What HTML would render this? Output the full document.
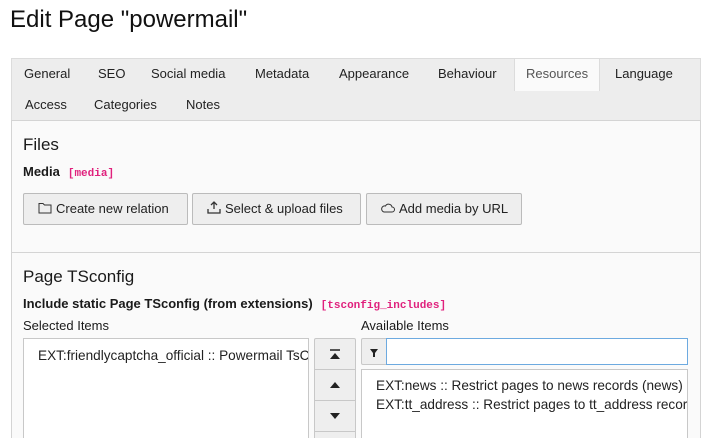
<!DOCTYPE html>
<html style="overflow:hidden;width:707px;height:438px"><head><meta charset="utf-8"><style>
*{box-sizing:border-box;margin:0;padding:0}
body{width:707px;height:438px;overflow:hidden;background:#fff;font-family:"Liberation Sans","DejaVu Sans",sans-serif;color:#1a1a1a;position:relative}
.a{position:absolute;white-space:nowrap}
.tabs{position:absolute;left:11px;top:58px;width:690px;height:63px;background:#ededed;border:1px solid #dcdcdc;border-bottom:none}
.tab{position:absolute;font-size:13px;color:#222}
.panel{position:absolute;left:11px;top:120px;width:690px;height:318px;background:#fafafa;border:1px solid #d4d4d4;border-bottom:none}
.btn{position:absolute;top:193px;height:32px;background:#eee;border:1px solid #bbb;border-radius:2px;font-size:13px;line-height:30px;padding-left:14px;color:#222}
.code{font-family:"Liberation Mono",monospace;color:#e0217d;font-size:11px;font-weight:bold;margin-left:8px}
.box{position:absolute;background:#fff;border:1px solid #c8c8c8;border-bottom:none;font-size:13.6px;color:#222}
.mv{position:absolute;left:314px;width:42px;height:32px;background:#eee;border:1px solid #c8c8c8}
</style></head><body>
<div class="a" style="left:10px;top:6px;font-size:24px;color:#111">Edit Page "powermail"</div>
<div class="tabs"></div>
<div style="position:absolute;left:514px;top:58px;width:86px;height:33px;background:#fafafa;border:1px solid #dcdcdc;border-bottom:none"></div>
<div class="tab a" style="left:24px;top:66px">General</div>
<div class="tab a" style="left:98px;top:66px">SEO</div>
<div class="tab a" style="left:151px;top:66px">Social media</div>
<div class="tab a" style="left:255px;top:66px">Metadata</div>
<div class="tab a" style="left:339px;top:66px">Appearance</div>
<div class="tab a" style="left:438px;top:66px">Behaviour</div>
<div class="tab a" style="left:526px;top:66px;color:#555">Resources</div>
<div class="tab a" style="left:615px;top:66px">Language</div>
<div class="tab a" style="left:25px;top:97px">Access</div>
<div class="tab a" style="left:94px;top:97px">Categories</div>
<div class="tab a" style="left:186px;top:97px">Notes</div>
<div class="panel"></div>
<div style="position:absolute;left:12px;top:252px;width:688px;height:1px;background:#d4d4d4"></div>
<div class="a" style="left:23px;top:135px;font-size:17px">Files</div>
<div class="a" style="left:23px;top:164px;font-size:13px;font-weight:bold">Media<span class="code">[media]</span></div>
<div class="btn a" style="left:23px;width:165px"><svg width="14" height="12" viewBox="0 0 14 12" style="vertical-align:-1px;margin-right:4px"><path d="M1 1.5h4l1.5 1.5H13v8H1z" fill="none" stroke="#333" stroke-width="1"/></svg>Create new relation</div>
<div class="btn a" style="left:192px;width:169px"><svg width="14" height="13" viewBox="0 0 14 13" style="vertical-align:-1px;margin-right:4px"><path d="M7 1v7M4 4l3-3 3 3M1 8v4h12V8" fill="none" stroke="#333" stroke-width="1.3"/></svg>Select &amp; upload files</div>
<div class="btn a" style="left:366px;width:156px"><svg width="14" height="10" viewBox="0 0 14 10" style="vertical-align:0px;margin-right:4px"><path d="M3 9h8a2.5 2.5 0 0 0 0-5 3.5 3.5 0 0 0-6.5-1A3 3 0 0 0 3 9z" fill="none" stroke="#333" stroke-width="1"/></svg>Add media by URL</div>
<div class="a" style="left:23px;top:267px;font-size:17px">Page TSconfig</div>
<div class="a" style="left:23px;top:296px;font-size:13px;font-weight:bold">Include static Page TSconfig (from extensions)<span class="code">[tsconfig_includes]</span></div>
<div class="a" style="left:23px;top:318px;font-size:13px">Selected Items</div>
<div class="a" style="left:361px;top:318px;font-size:13px">Available Items</div>
<div class="box" style="left:23px;top:338px;width:286px;height:100px;overflow:hidden"><div class="a" style="left:14px;top:9px">EXT:friendlycaptcha_official :: Powermail TsConfig</div></div>
<div class="mv" style="top:338px;border-radius:2px 2px 0 0"><svg width="40" height="30"><path d="M15 11h10" stroke="#222" stroke-width="1.5"/><path d="M15 20l5-6 5 6z" fill="#222"/></svg></div>
<div class="mv" style="top:369px"><svg width="40" height="30"><path d="M15 18l5-6 5 6z" fill="#222"/></svg></div>
<div class="mv" style="top:400px"><svg width="40" height="30"><path d="M15 12l5 6 5-6z" fill="#222"/></svg></div>
<div class="mv" style="top:431px;height:7px;border-bottom:none"></div>
<div style="position:absolute;left:361px;top:338px;width:26px;height:27px;background:#eee;border:1px solid #c8c8c8;border-radius:2px 0 0 2px"><svg width="24" height="25"><path d="M8 10h8l-3 4v4h-2v-4z" fill="#222"/></svg></div>
<div style="position:absolute;left:386px;top:338px;width:302px;height:27px;background:#fff;border:1px solid #6daae0"></div>
<div class="box" style="left:361px;top:369px;width:327px;height:69px;overflow:hidden"><div class="a" style="left:14px;top:8px">EXT:news :: Restrict pages to news records (news)</div><div class="a" style="left:14px;top:27px">EXT:tt_address :: Restrict pages to tt_address records</div></div>
</body></html>
